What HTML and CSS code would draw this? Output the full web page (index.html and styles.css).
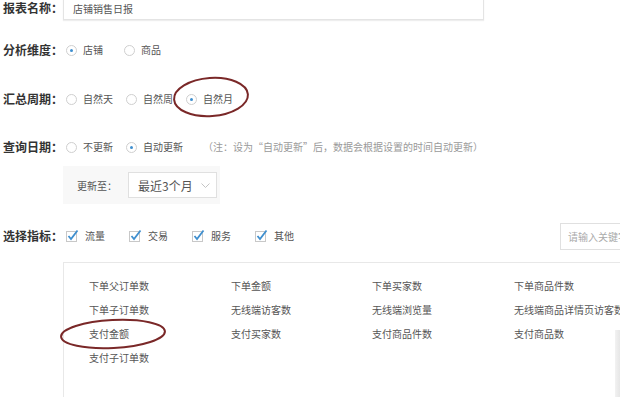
FILE: index.html
```html
<!DOCTYPE html>
<html lang="zh-CN">
<head>
<meta charset="utf-8">
<title>报表设置</title>
<link rel="stylesheet" href="styles.css">
</head>
<body>
<div class="page">
  <div class="row row-name">
    <div class="label">报表名称：</div>
    <div class="text-input">店铺销售日报</div>
  </div>

  <div class="row row-dim">
    <div class="label">分析维度：</div>
    <div class="opts gap-wide">
      <div class="opt"><span class="radio checked"></span><span>店铺</span></div>
      <div class="opt"><span class="radio"></span><span>商品</span></div>
    </div>
  </div>

  <div class="row row-period">
    <div class="label">汇总周期：</div>
    <div class="opts gap-narrow">
      <div class="opt"><span class="radio"></span><span>自然天</span></div>
      <div class="opt"><span class="radio"></span><span>自然周</span></div>
      <div class="opt"><span class="radio checked"></span><span>自然月</span></div>
    </div>
  </div>

  <div class="row row-date">
    <div class="label">查询日期：</div>
    <div class="opts gap-narrow">
      <div class="opt"><span class="radio"></span><span>不更新</span></div>
      <div class="opt"><span class="radio checked"></span><span>自动更新</span></div>
    </div>
    <div class="note">（注：设为“自动更新”后，数据会根据设置的时间自动更新）</div>
  </div>

  <div class="sub-panel">
    <span class="sub-label">更新至：</span>
    <div class="select">
      <span>最近3个月</span>
      <svg class="chev" width="9" height="5" viewBox="0 0 9 5"><polyline points="0.5,0.5 4.5,4.5 8.5,0.5" fill="none" stroke="#c4c4c4" stroke-width="1"/></svg>
    </div>
  </div>

  <div class="row row-metrics">
    <div class="label">选择指标：</div>
    <div class="opts gap-check">
      <div class="opt"><svg class="check" width="13" height="13" viewBox="0 0 13 13"><rect x="0.5" y="2.5" width="10" height="10" fill="#fff" stroke="#c8c8c8"/><polyline points="2.5,7 5,10 11.5,1.5" fill="none" stroke="#3f8fcf" stroke-width="1.8"/></svg><span>流量</span></div>
      <div class="opt"><svg class="check" width="13" height="13" viewBox="0 0 13 13"><rect x="0.5" y="2.5" width="10" height="10" fill="#fff" stroke="#c8c8c8"/><polyline points="2.5,7 5,10 11.5,1.5" fill="none" stroke="#3f8fcf" stroke-width="1.8"/></svg><span>交易</span></div>
      <div class="opt"><svg class="check" width="13" height="13" viewBox="0 0 13 13"><rect x="0.5" y="2.5" width="10" height="10" fill="#fff" stroke="#c8c8c8"/><polyline points="2.5,7 5,10 11.5,1.5" fill="none" stroke="#3f8fcf" stroke-width="1.8"/></svg><span>服务</span></div>
      <div class="opt"><svg class="check" width="13" height="13" viewBox="0 0 13 13"><rect x="0.5" y="2.5" width="10" height="10" fill="#fff" stroke="#c8c8c8"/><polyline points="2.5,7 5,10 11.5,1.5" fill="none" stroke="#3f8fcf" stroke-width="1.8"/></svg><span>其他</span></div>
    </div>
    <div class="search">请输入关键字</div>
  </div>

  <div class="metric-box">
    <div class="metric-grid">
      <span>下单父订单数</span><span>下单金额</span><span>下单买家数</span><span>下单商品件数</span>
      <span>下单子订单数</span><span>无线端访客数</span><span>无线端浏览量</span><span>无线端商品详情页访客数</span>
      <span>支付金额</span><span>支付买家数</span><span>支付商品件数</span><span>支付商品数</span>
      <span>支付子订单数</span>
    </div>
  </div>
</div>

<div class="edge-shade"></div>

<svg class="marks" width="620" height="397" viewBox="0 0 620 397">
  <ellipse cx="211" cy="97" rx="37" ry="19" transform="rotate(-4 211 97)" fill="none" stroke="#7a2828" stroke-width="2"/>
  <ellipse cx="113" cy="334" rx="52" ry="14" transform="rotate(-3 113 334)" fill="none" stroke="#7a2828" stroke-width="2"/>
</svg>
</body>
</html>
```

FILE: styles.css
```css
html, body {
  margin: 0;
  padding: 0;
  background: #ffffff;
}
body {
  width: 620px;
  height: 397px;
  overflow: hidden;
  position: relative;
  font-family: "Noto Sans CJK SC", "Noto Sans", sans-serif;
  font-size: 10px;
  color: #555555;
}
.page {
  display: flow-root;
  padding-left: 3px;
}
.row {
  display: flex;
  align-items: center;
  height: 20px;
}
.label {
  width: 60px;
  flex-shrink: 0;
  font-size: 12px;
  font-weight: bold;
  color: #333333;
  line-height: 1;
  white-space: nowrap;
}
.row-name {
  height: 24px;
  margin-top: -4px;
}
.text-input {
  box-sizing: border-box;
  width: 421px;
  height: 24px;
  border: 1px solid #e4e4e4;
  box-shadow: 0 1px 1px #eeeeee;
  padding-left: 9px;
  display: flex;
  align-items: center;
  font-size: 10px;
  color: #555555;
}
.row-dim { margin-top: 20px; }
.row-period { margin-top: 29px; }
.row-date { margin-top: 28px; }

.opts {
  display: flex;
  align-items: center;
  margin-left: 3px;
}
.gap-wide { gap: 21px; }
.gap-narrow { gap: 13px; }
.gap-check { gap: 24px; }

.opt {
  display: flex;
  align-items: center;
  gap: 6px;
  white-space: nowrap;
  line-height: 1;
}
.radio {
  box-sizing: border-box;
  width: 11px;
  height: 11px;
  border: 1px solid #cfcfcf;
  border-radius: 50%;
  display: flex;
  align-items: center;
  justify-content: center;
  flex-shrink: 0;
}
.radio.checked::after {
  content: "";
  width: 3px;
  height: 3px;
  border-radius: 50%;
  background: #3f8fcf;
}
.note {
  margin-left: 20px;
  color: #9a9a9a;
  white-space: nowrap;
  line-height: 1;
}

.sub-panel {
  margin-top: 9px;
  margin-left: 60px;
  width: 157px;
  height: 38px;
  box-sizing: border-box;
  padding-left: 14px;
  background: #f8f8f8;
  display: flex;
  align-items: center;
}
.sub-label {
  width: 51px;
  flex-shrink: 0;
  white-space: nowrap;
  color: #555555;
}
.select {
  box-sizing: border-box;
  width: 89px;
  height: 26px;
  border: 1px solid #e0e0e0;
  background: #ffffff;
  display: flex;
  align-items: center;
  padding-left: 9px;
  gap: 8px;
  font-size: 12px;
  color: #555555;
  white-space: nowrap;
}
.chev {
  display: block;
  margin-top: 1px;
}

.row-metrics {
  margin-top: 18px;
  height: 28px;
}
.row-metrics .opts {
  margin-left: 3px;
}
.check {
  display: block;
  flex-shrink: 0;
  margin-top: -2px;
}
.search {
  box-sizing: border-box;
  margin-left: auto;
  margin-right: -40px;
  width: 100px;
  height: 27px;
  border: 1px solid #e0e0e0;
  padding-left: 7px;
  display: flex;
  align-items: center;
  color: #aaaaaa;
  white-space: nowrap;
}

.metric-box {
  margin-top: 12px;
  margin-left: 60px;
  margin-right: -30px;
  height: 200px;
  border: 1px solid #e8e8e8;
  box-sizing: border-box;
  padding: 11px 0 0 25px;
}
.metric-grid {
  display: grid;
  grid-template-columns: 142px 141px 142px 142px;
  grid-auto-rows: 24px;
  align-items: center;
  white-space: nowrap;
  line-height: 1;
  color: #555555;
}

.edge-shade {
  position: absolute;
  left: 615px;
  top: 330px;
  width: 5px;
  height: 67px;
  background: linear-gradient(to right, #f2f2f2, #e6e6e6);
}
.marks {
  position: absolute;
  left: 0;
  top: 0;
  pointer-events: none;
}
```
